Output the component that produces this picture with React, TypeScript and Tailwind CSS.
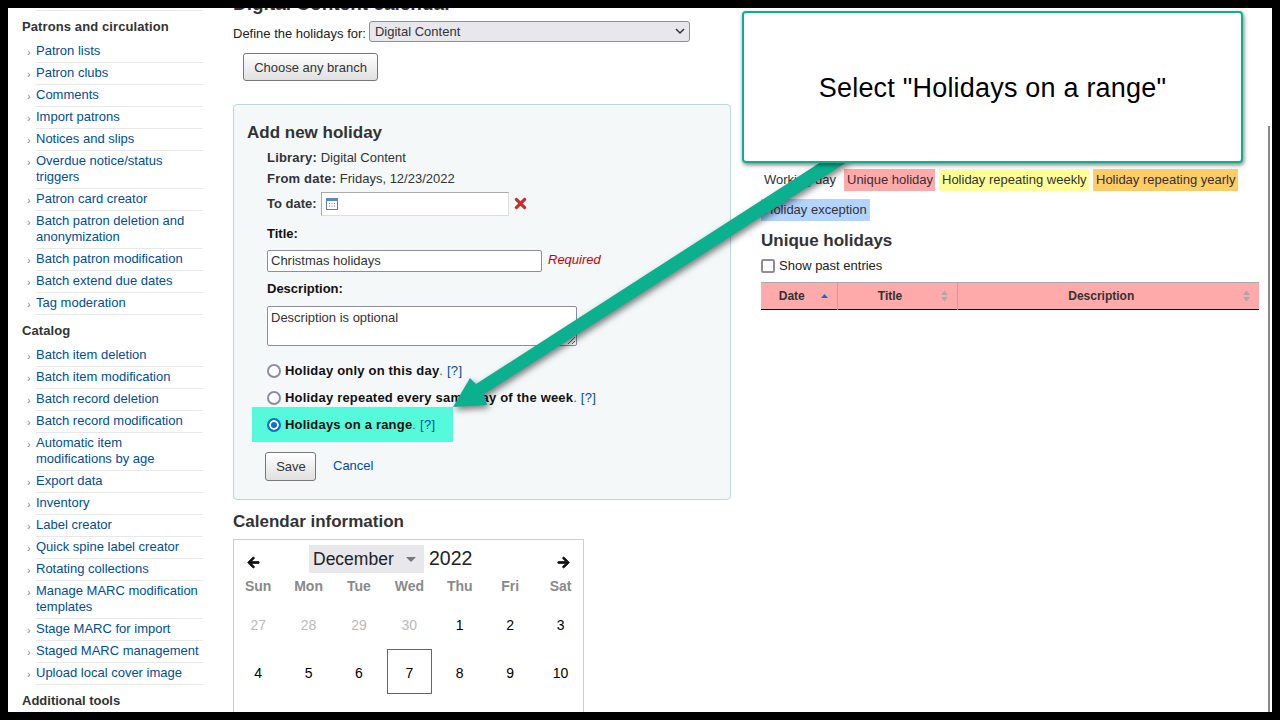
import { FaArrowLeft, FaArrowRight, FaTimes } from "react-icons/fa";

const sections = [
  {
    title: "Patrons and circulation",
    links: [
      "Patron lists",
      "Patron clubs",
      "Comments",
      "Import patrons",
      "Notices and slips",
      "Overdue notice/status triggers",
      "Patron card creator",
      "Batch patron deletion and anonymization",
      "Batch patron modification",
      "Batch extend due dates",
      "Tag moderation",
    ],
  },
  {
    title: "Catalog",
    links: [
      "Batch item deletion",
      "Batch item modification",
      "Batch record deletion",
      "Batch record modification",
      "Automatic item\nmodifications by age",
      "Export data",
      "Inventory",
      "Label creator",
      "Quick spine label creator",
      "Rotating collections",
      "Manage MARC modification templates",
      "Stage MARC for import",
      "Staged MARC management",
      "Upload local cover image",
    ],
  },
];

const dayNames = ["Sun", "Mon", "Tue", "Wed", "Thu", "Fri", "Sat"];
const days = ["27", "28", "29", "30", "1", "2", "3", "4", "5", "6", "7", "8", "9", "10"];

function Sidebar() {
  return (
    <aside className="w-[225px] shrink-0 pl-[14px]">
      <div className="ml-[14px] mt-[2px] w-[167px] border-t border-[#e8e8e8]" />
      {sections.map((section) => (
        <div key={section.title} className="mb-[7px]">
          <h5 className="mt-[8px] h-[16px] text-[13px] font-bold leading-[16px] tracking-[0.1px] text-[#333]">
            {section.title}
          </h5>
          <ul className="mt-[8px]">
            {section.links.map((link) => (
              <li key={link} className="mt-[2px] flex first:mt-0">
                <span className="w-[14px] pt-[1px] pl-[5px] text-[11px] leading-[16px] text-[#888]">›</span>
                <a className="w-[167px] whitespace-pre-line border-b border-[#e8e8e8] pb-[3px] text-[13px] leading-[16px] text-[#004d99]">
                  {link}
                </a>
              </li>
            ))}
          </ul>
        </div>
      ))}
      <h5 className="mt-[8px] h-[16px] text-[13px] font-bold leading-[16px] text-[#333]">Additional tools</h5>
    </aside>
  );
}

function RadioRow({ label, checked }: { label: string; checked?: boolean }) {
  return (
    <label className="flex h-[16px] items-center text-[13px] leading-[16px]">
      <input
        type="radio"
        name="holiday"
        defaultChecked={checked}
        className="m-0 mr-[4px] h-[14px] w-[14px] appearance-none rounded-full border-2 border-[#8f8c9e] bg-white checked:border-[#0b6fd4] checked:bg-[#0b6fd4] checked:shadow-[inset_0_0_0_2px_white]"
      />
      <b className="tracking-[0.2px] text-[#111]">{label}</b>
      <span className="text-[#555]">.</span>
      <a className="ml-[4px] tracking-[0.3px] text-[#004d99]">[?]</a>
    </label>
  );
}

function HolidayForm() {
  return (
    <section className="mt-[23px] rounded-[4px] border border-[#b9d8d9] bg-[#f4f8f9] pb-[18px] pl-[13px] pt-[17px]">
      <h3 className="text-[17px] font-bold leading-[22px] text-[#333]">Add new holiday</h3>
      <div className="ml-[20px] text-[13px] leading-[16px] text-[#333]">
        <p className="mt-[6px]">
          <b className="tracking-[0.2px]">Library:</b> Digital Content
        </p>
        <p className="mt-[5px]">
          <b className="tracking-[0.2px]">From date:</b> Fridays, 12/23/2022
        </p>
        <div className="mt-[5px] flex items-center">
          <b>To date:</b>
          <div className="relative ml-[4px] h-[24px] w-[188px] border border-[#aaa] border-b-[#ddd] border-r-[#ddd] bg-white">
            <svg className="absolute left-[3px] top-[4px]" width="14" height="14" viewBox="0 0 14 14">
              <rect x="1.5" y="1.5" width="11" height="11" fill="#fff" stroke="#5b7fb5" />
              <rect x="1" y="1" width="12" height="3" fill="#5b86c4" />
              <path d="M4 6h1v1H4zM6.500 6h1v1h-1zM9 6h1v1H9zM4 8.500h1v1H4zM6.500 8.500h1v1h-1zM9 8.500h1v1H9z" fill="#5b7fb5" />
            </svg>
          </div>
          <FaTimes className="-mt-[2px] ml-[3px] text-[17px] text-[#d02b2b]" />
        </div>
        <p className="mt-[10px] font-bold text-[#111]">Title:</p>
        <div className="mt-[8px] flex items-center">
          <input
            readOnly
            value="Christmas holidays"
            className="h-[22px] w-[275px] rounded-[2px] border border-[#8f8c9e] bg-white px-[3px] pb-[2px] text-[#333] outline-none"
          />
          <span className="ml-[6px] pb-[2px] italic text-[#cc0000]">Required</span>
        </div>
        <p className="mt-[9px] font-bold text-[#111]">Description:</p>
        <textarea
          readOnly
          value="Description is optional"
          className="mt-[9px] block h-[40px] w-[310px] rounded-[2px] border border-[#8f8c9e] bg-white px-[3px] pb-[1px] pt-[3px] text-[#333] outline-none"
        />
        <div className="mt-[17px]">
          <RadioRow label="Holiday only on this day" />
        </div>
        <div className="mt-[11px]">
          <RadioRow label="Holiday repeated every same day of the week" />
        </div>
        <div className="-ml-[15px] mt-[1px] w-[201px] bg-[#55fada] pb-[9px] pl-[15px] pt-[10px]">
          <RadioRow label="Holidays on a range" checked />
        </div>
        <div className="-ml-[2px] mt-[10px] flex items-center">
          <button className="h-[29px] w-[51px] rounded-[3px] border border-[#777] bg-gradient-to-b from-white to-[#e0e0e0] pl-[1px] text-[#333]">
            Save
          </button>
          <a className="ml-[17px] pb-[2px] text-[#004d99]">Cancel</a>
        </div>
      </div>
    </section>
  );
}

function Calendar() {
  return (
    <section className="mt-[6px] h-[200px] w-[351px] border border-[#b9d8d9] pt-[5px]">
      <div className="flex h-[28px] items-center px-[13px] text-[#111]">
        <FaArrowLeft className="mt-[6px] stroke-current stroke-[30] text-[13px]" />
        <div className="ml-[49px] flex h-[28px] w-[115px] items-center justify-between bg-[#e8e7ec] pl-[4px] pr-[8px]">
          <span className="text-[17.5px] text-[#222]">December</span>
          <svg width="10" height="5" viewBox="0 0 10 5">
            <path d="M0 0h10L5 5z" fill="#777" />
          </svg>
        </div>
        <span className="ml-[5px] -mt-[1px] text-[19.5px] text-[#222]">2022</span>
        <FaArrowRight className="ml-auto mt-[6px] stroke-current stroke-[30] text-[13px]" />
      </div>
      <div className="-ml-px mt-[5px] grid grid-cols-[repeat(7,50.4px)] text-center text-[14px] font-bold leading-[16px] text-[#8a8a8a]">
        {dayNames.map((name) => (
          <span key={name}>{name}</span>
        ))}
      </div>
      <div className="-ml-px mt-[7px] grid grid-cols-[repeat(7,50.4px)] text-center text-[14px]">
        {days.map((day, i) => (
          <div key={day} className="flex h-[48px] items-center justify-center">
            {day === "7" ? (
              <span className="-mt-[3px] flex h-[45px] w-[45px] items-center justify-center border border-[#538200] pt-[3px] text-black">
                {day}
              </span>
            ) : (
              <span className={i < 4 ? "text-[#bbb]" : "text-black"}>{day}</span>
            )}
          </div>
        ))}
      </div>
    </section>
  );
}

function SortIcon({ active }: { active?: boolean }) {
  return (
    <svg width="9" height="12" viewBox="0 0 9 12" className="absolute right-[8px] top-[7px]">
      {active ? (
        <path d="M1 8l3.500-4L8 8z" fill="#0b6fd4" />
      ) : (
        <path d="M4.500 0.500L8 5H1zM4.500 11.500L1 7h7z" fill="#aaa" />
      )}
    </svg>
  );
}

function RightColumn() {
  return (
    <div className="ml-[30px] mt-[161px] w-[498px] text-[13px]">
      <div className="flex flex-wrap gap-x-[4px] gap-y-[8px] whitespace-nowrap leading-[22px] text-[#333]">
        <span className="w-[79px] px-[3px]">Working day</span>
        <span className="w-[91px] bg-[#ffaaaa] px-[3px]">Unique holiday</span>
        <span className="w-[150px] bg-[#ffff99] px-[3px]">Holiday repeating weekly</span>
        <span className="w-[145px] bg-[#ffcc66] px-[3px]">Holiday repeating yearly</span>
        <span className="bg-[#b3d4ff] px-[3px]">Holiday exception</span>
      </div>
      <h3 className="mt-[9px] text-[17px] font-bold leading-[22px] text-[#333]">Unique holidays</h3>
      <label className="mt-[6px] flex h-[16px] items-center leading-[16px] text-[#222]">
        <input
          type="checkbox"
          className="m-0 mr-[4px] h-[14px] w-[14px] appearance-none rounded-[2px] border-2 border-[#8f8c9e] bg-white"
        />
        Show past entries
      </label>
      <table className="mt-[8px] w-full table-fixed border-collapse">
        <thead>
          <tr className="h-[27px] border-b border-t border-b-black border-t-[#aaa] bg-[#ffaaaa] text-[12px] text-[#333]">
            <th className="relative w-[76px] border-r border-[#aaa] pr-[14px] font-bold">
              Date
              <SortIcon active />
            </th>
            <th className="relative w-[120px] border-r border-[#aaa] pr-[14px] font-bold">
              Title
              <SortIcon />
            </th>
            <th className="relative pr-[14px] font-bold">
              Description
              <SortIcon />
            </th>
          </tr>
        </thead>
      </table>
    </div>
  );
}

export default function App() {
  return (
    <div className="h-[720px] w-[1280px] bg-black p-2 font-['Liberation_Sans',Arial,sans-serif]">
      <div className="relative flex h-[704px] w-[1264px] overflow-hidden bg-white">
        <Sidebar />
        <main className="w-[498px] shrink-0 text-[13px] text-[#222]">
          <h2 className="-mt-[15px] text-[19px] font-bold leading-[22px] text-[#333]">Digital Content calendar</h2>
          <div className="mt-[6px] flex h-[21px] items-start">
            <span className="pt-[5px] leading-[16px]">Define the holidays for:</span>
            <div className="relative ml-[3px] h-[21px] w-[321px] rounded-[3px] border border-[#8f8c9e] bg-[#e8e7ec] pl-[5px] pt-[1px] leading-[18px] text-[#333]">
              Digital Content
              <svg className="absolute right-[4px] top-[6px]" width="10" height="7" viewBox="0 0 10 7">
                <path d="M1 1l4 4 4-4" fill="none" stroke="#333" strokeWidth="1.500" />
              </svg>
            </div>
          </div>
          <button className="ml-[10px] mt-[11px] block h-[28px] w-[135px] rounded-[3px] border border-[#777] bg-gradient-to-b from-white to-[#e0e0e0] pt-[1px] text-[#333]">
            Choose any branch
          </button>
          <HolidayForm />
          <h3 className="mt-[11px] text-[17px] font-bold leading-[22px] text-[#333]">Calendar information</h3>
          <Calendar />
        </main>
        <RightColumn />

        {/* scrollbar edge */}
        <div className="absolute bottom-0 right-[2px] top-[118px] w-[2px] bg-[#888]" />

        {/* annotation overlay */}
        <svg
          className="pointer-events-none absolute -left-2 -top-2 drop-shadow-[2px_3px_3px_rgba(0,0,0,0.5)]"
          width="1280"
          height="720"
          viewBox="0 0 1280 720"
        >
          <polygon points="824,160 850,160 484,394 487,405 453,407 470,378 476,384" fill="#0bb08f" />
        </svg>
        <div className="absolute left-[734px] top-[3px] flex h-[152px] w-[501px] items-center justify-center rounded-[4px] border-2 border-[#0bb08f] bg-white pt-[2px] text-[27px] tracking-[0.2px] text-black shadow-[1px_2px_4px_rgba(0,0,0,0.5)]">
          Select "Holidays on a range"
        </div>
      </div>
    </div>
  );
}
